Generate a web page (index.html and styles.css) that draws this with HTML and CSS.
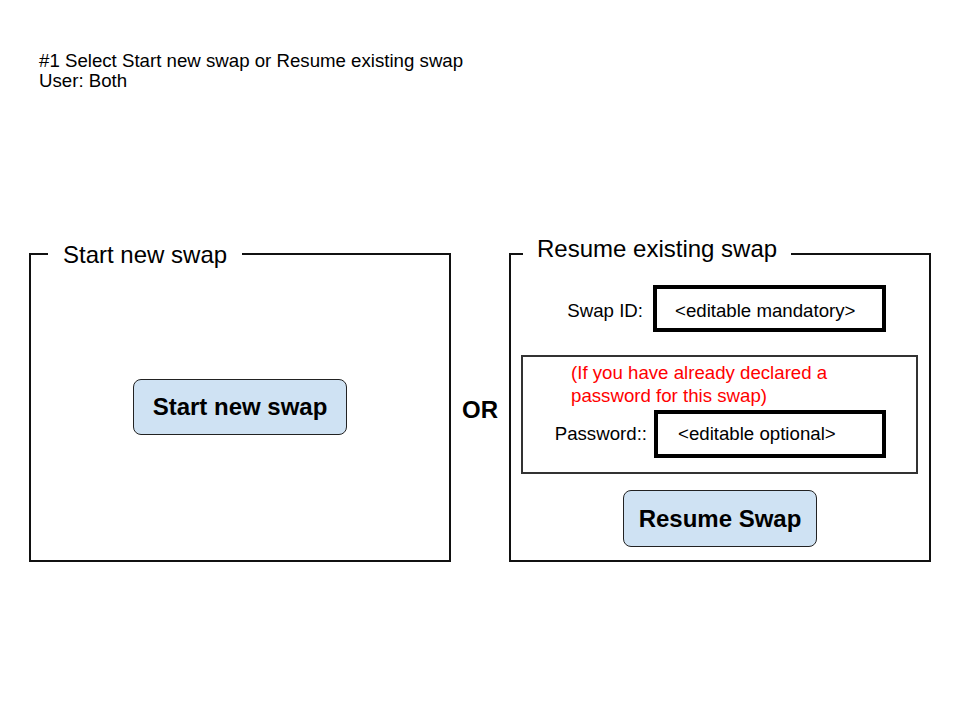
FILE: index.html
```
<!DOCTYPE html>
<html lang="en">
<head>
    <meta charset="UTF-8">
    <meta name="viewport" content="width=device-width, initial-scale=1.0">
    <title>Select Start new swap or Resume existing swap</title>
    <link rel="stylesheet" href="styles.css">
</head>
<body>
    <div class="header">
        <p>#1 Select Start new swap or Resume existing swap</p>
        <p>User: Both</p>
    </div>

    <div class="panels">
        <section class="panel panel-start">
            <h2 class="panel-title">Start new swap</h2>
            <div class="panel-body">
                <button class="btn btn-start">Start new swap</button>
            </div>
        </section>

        <div class="or">OR</div>

        <section class="panel panel-resume">
            <h2 class="panel-title">Resume existing swap</h2>
            <div class="field field-id">
                <span class="field-label">Swap ID:</span>
                <div class="text-box">&lt;editable mandatory&gt;</div>
            </div>
            <div class="password-group">
                <p class="note">(If you have already declared a<br>password for this swap)</p>
                <div class="field field-pass">
                    <span class="field-label">Password::</span>
                    <div class="text-box">&lt;editable optional&gt;</div>
                </div>
            </div>
            <button class="btn btn-resume">Resume Swap</button>
        </section>
    </div>
</body>
</html>
```

FILE: styles.css
```
body {
    margin: 0;
    font-family: "Liberation Sans", Arial, sans-serif;
    color: #000;
    background: #fff;
}

.header {
    padding: 51px 0 0 39px;
    font-size: 18.67px;
    line-height: 20px;
}

.header p {
    margin: 0;
}

.panels {
    display: flex;
    align-items: center;
    margin-top: 162px;
    padding-left: 29px;
}

.panel {
    box-sizing: border-box;
    width: 422px;
    height: 309px;
    border: 2px solid #111;
    display: flex;
    flex-direction: column;
}

.panel-title {
    align-self: flex-start;
    margin: -14px 0 0 17px;
    padding: 0 15px;
    background: #fff;
    font-size: 24px;
    font-weight: normal;
    line-height: 28px;
}

.panel-resume .panel-title {
    margin: -20px 0 0 12px;
    padding: 0 14px;
}

.panel-body {
    flex: 1;
    display: flex;
    align-items: center;
    justify-content: center;
    padding-bottom: 15px;
}

.btn {
    box-sizing: border-box;
    padding: 0;
    font-family: "Liberation Sans", Arial, sans-serif;
    font-size: 24px;
    font-weight: bold;
    color: #000;
    background: #cfe2f3;
    border: 1px solid #222;
    border-radius: 8px;
}

.btn-start {
    width: 214px;
    height: 56px;
}

.btn-resume {
    align-self: center;
    width: 194px;
    height: 57px;
    margin-top: 16px;
}

.or {
    width: 58px;
    padding-top: 5px;
    text-align: center;
    font-size: 24px;
    font-weight: bold;
    line-height: 28px;
}

/* input rows */
.field {
    display: flex;
    align-items: baseline;
    justify-content: flex-end;
    gap: 10px;
    font-size: 18.67px;
    line-height: 22px;
}

.field-id {
    margin: 22px 43px 0 0;
}

.text-box {
    box-sizing: border-box;
    flex-shrink: 0;
    width: 233px;
    border: 4px solid #000;
    padding: 0 18px;
    display: flex;
    align-items: center;
}

.field-id .text-box {
    height: 47px;
    padding-top: 5px;
}

.password-group {
    box-sizing: border-box;
    height: 119px;
    margin: 23px 11px 0 10px;
    border: 2px solid #333;
    padding-top: 4px;
}

.note {
    margin: 0;
    padding-left: 48px;
    color: #f00;
    font-size: 18.67px;
    line-height: 23px;
}

.field-pass {
    margin: 3px 30px 0 0;
    gap: 7px;
}

.field-pass .text-box {
    width: 232px;
    height: 48px;
    padding-left: 20px;
}
```
